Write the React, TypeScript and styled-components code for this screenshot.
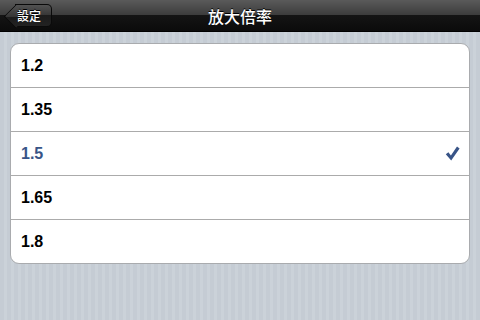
import styled, { createGlobalStyle } from 'styled-components';

const GlobalStyle = createGlobalStyle`
  html, body {
    margin: 0;
    padding: 0;
  }
  body {
    font-family: "Liberation Sans", "Noto Sans CJK SC", sans-serif;
  }
`;

const Screen = styled.div`
  width: 480px;
  height: 320px;
  overflow: hidden;
  display: flex;
  flex-direction: column;
  background: repeating-linear-gradient(
    90deg,
    #c5ccd4 0,
    #c5ccd4 4px,
    #cbd2d9 4px,
    #cbd2d9 7px
  );
`;

const NavBar = styled.div`
  position: relative;
  height: 31px;
  flex-shrink: 0;
  display: flex;
  align-items: center;
  justify-content: center;
  background: linear-gradient(#5a5a5a 0, #3b3b3b 50%, #141414 50%, #0b0b0b 100%);
  border-bottom: 1px solid #000;
`;

const BackButton = styled.button`
  position: absolute;
  left: 15px;
  top: 4px;
  height: 23px;
  width: 37px;
  padding: 0;
  box-sizing: border-box;
  border: 1px solid #0a0a0a;
  border-left: none;
  border-radius: 0 5px 5px 0;
  background: linear-gradient(#525252 0, #363636 50%, #1c1c1c 50%, #222 100%);
  color: #fff;
  font-family: "Liberation Sans", "Noto Sans CJK SC", sans-serif;
  font-size: 12px;
  font-weight: 500;
  display: flex;
  align-items: center;
  text-shadow: 0 -1px 0 #000;

  &::before {
    content: '';
    position: absolute;
    left: -8px;
    top: 2.5px;
    width: 16px;
    height: 16px;
    transform: rotate(45deg);
    border-left: 1px solid #0a0a0a;
    border-bottom: 1px solid #0a0a0a;
    border-radius: 0 0 0 2px;
    background: linear-gradient(135deg, #525252 0, #363636 50%, #1c1c1c 50%, #222 100%);
  }

  span {
    position: relative;
    margin-left: 2px;
  }
`;

const Title = styled.h1`
  margin: 0;
  color: #fff;
  font-family: "Liberation Sans", "Noto Sans CJK SC", sans-serif;
  font-size: 16px;
  font-weight: 500;
  text-shadow: 0 -1px 0 #000;
`;

const Content = styled.div`
  padding: 11px 10px 0;
`;

const Group = styled.ul`
  margin: 0;
  padding: 0;
  list-style: none;
  background: #fff;
  border: 1px solid #a9abae;
  border-radius: 9px;
  overflow: hidden;
`;

const Row = styled.li<{ $selected?: boolean }>`
  height: 43px;
  display: flex;
  align-items: center;
  justify-content: space-between;
  padding: 0 9px 0 10px;
  font-size: 16px;
  font-weight: bold;
  color: ${(p) => (p.$selected ? '#385487' : '#000')};

  & + & {
    border-top: 1px solid #ababab;
  }
`;

const Check = () => (
  <svg width="15" height="15" viewBox="0 0 15 15">
    <path
      d="M0.8 8.2 L3.4 6.3 L5.9 9.6 L12 0.6 L14.6 2.4 L6.2 14.4 Z"
      fill="#385487"
    />
  </svg>
);

const options = ['1.2', '1.35', '1.5', '1.65', '1.8'];
const current = '1.5';

function App() {
  return (
    <>
      <GlobalStyle />
      <Screen>
        <NavBar>
          <BackButton>
            <span>設定</span>
          </BackButton>
          <Title>放大倍率</Title>
        </NavBar>
        <Content>
          <Group>
            {options.map((o) => (
              <Row key={o} $selected={o === current}>
                {o}
                {o === current && <Check />}
              </Row>
            ))}
          </Group>
        </Content>
      </Screen>
    </>
  );
}

export default App;
